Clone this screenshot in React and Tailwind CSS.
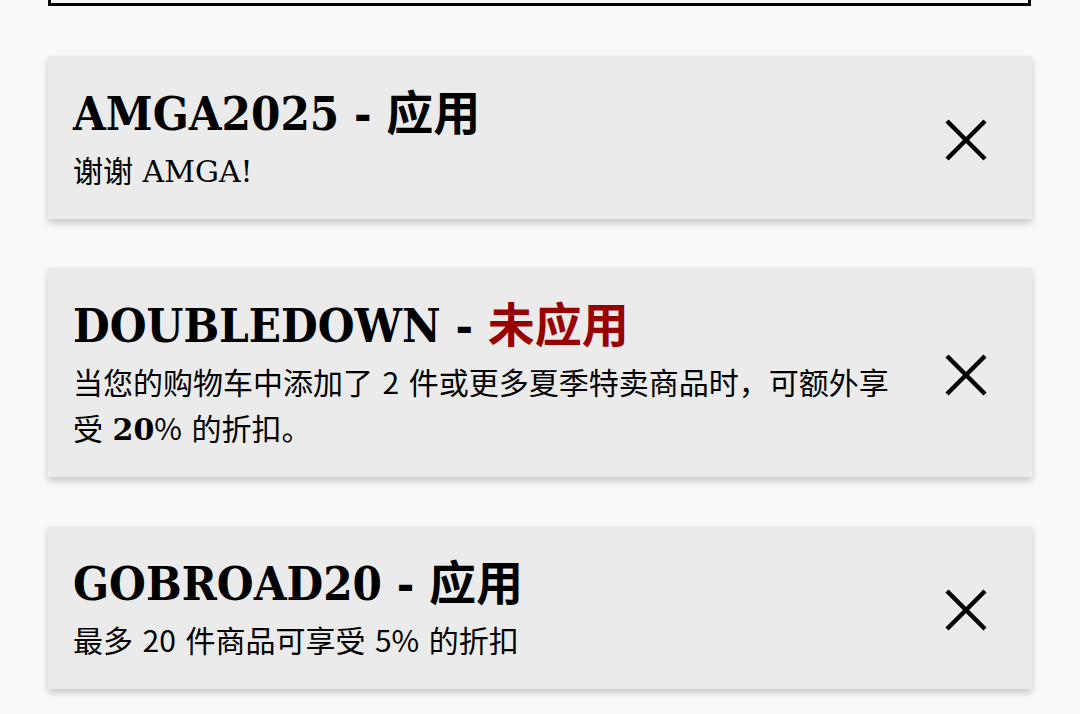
const serif = { fontFamily: '"DejaVu Serif", "Noto Sans CJK SC", serif' };

function CloseIcon() {
  return (
    <svg width="44" height="44" viewBox="0 0 44 44" className="shrink-0">
      <path d="M3 3 L41 41 M41 3 L3 41" stroke="#000" strokeWidth="4.5" fill="none" />
    </svg>
  );
}

const Sans = ({ children }) => (
  <span className="leading-none font-['Noto_Sans_CJK_SC',sans-serif]">{children}</span>
);

const coupons = [
  {
    code: 'AMGA2025',
    applied: true,
    body: <>谢谢 AMGA!</>,
  },
  {
    code: 'DOUBLEDOWN',
    applied: false,
    body: (
      <>
        当您的购物车中添加了 <Sans>2</Sans> 件或更多夏季特卖商品时，可额外享受 <b className="font-bold leading-none">20</b><Sans>%</Sans> 的折扣。
      </>
    ),
  },
  {
    code: 'GOBROAD20',
    applied: true,
    body: (
      <>
        最多 <Sans>20</Sans> 件商品可享受 <Sans>5%</Sans> 的折扣
      </>
    ),
  },
];

export default function App() {
  return (
    <div className="min-h-[714px] bg-[#f9f9f9] px-[48px] overflow-hidden" style={serif}>
      <div className="h-[6px] border-x-[3px] border-b-[3px] border-black mr-[1px]" />
      <div className="flex flex-col gap-[49px] mt-[50px]">
        {coupons.map((c) => (
          <div
            key={c.code}
            className="flex items-center bg-[#ebebeb] pl-[25px] pr-[44px] pt-[28px] pb-[24px] shadow-[0_4px_7px_rgba(0,0,0,0.2)]"
          >
            <div className="flex-1 pr-[50px]">
              <div className="text-[47px] leading-[60px] font-bold text-black font-stretch-condensed">
                {c.code} -{' '}
                {c.applied ? (
                  <span>应用</span>
                ) : (
                  <span className="text-[#990000]">未应用</span>
                )}
              </div>
              <div className="text-[30px] leading-[46px] text-black mt-[5px]">{c.body}</div>
            </div>
            <CloseIcon />
          </div>
        ))}
      </div>
    </div>
  );
}
